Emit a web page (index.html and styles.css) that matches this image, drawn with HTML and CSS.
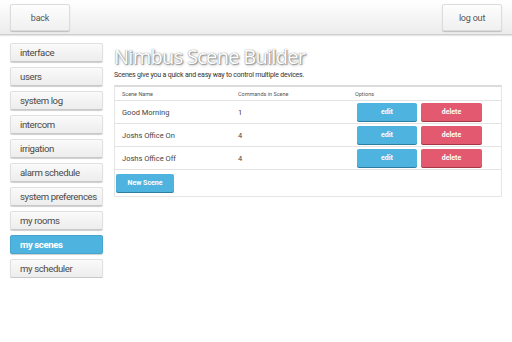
FILE: index.html
```html
<!DOCTYPE html>
<html lang="en">
<head>
    <meta charset="UTF-8">
    <meta name="viewport" content="width=device-width, initial-scale=1.0">
    <title>Nimbus Scene Builder</title>
    <link rel="stylesheet" href="styles.css">
</head>
<body>
    <div class="topbar">
        <button class="topbtn">back</button>
        <button class="topbtn">log out</button>
    </div>

    <div class="main">
        <ul class="menu">
            <li>interface</li>
            <li>users</li>
            <li>system log</li>
            <li>intercom</li>
            <li>irrigation</li>
            <li>alarm schedule</li>
            <li>system preferences</li>
            <li>my rooms</li>
            <li class="active">my scenes</li>
            <li>my scheduler</li>
        </ul>

        <div class="content">
            <h1>Nimbus Scene Builder</h1>
            <p class="lead">Scenes give you a quick and easy way to control multiple devices.</p>

            <div class="panel">
                <table class="scenes">
                    <tr>
                        <th class="c-name">Scene Name</th>
                        <th class="c-cmd">Commands in Scene</th>
                        <th>Options</th>
                    </tr>
                    <tr>
                        <td>Good Morning</td>
                        <td>1</td>
                        <td class="opts"><button class="btn edit">edit</button><button class="btn delete">delete</button></td>
                    </tr>
                    <tr>
                        <td>Joshs Office On</td>
                        <td>4</td>
                        <td class="opts"><button class="btn edit">edit</button><button class="btn delete">delete</button></td>
                    </tr>
                    <tr>
                        <td>Joshs Office Off</td>
                        <td>4</td>
                        <td class="opts"><button class="btn edit">edit</button><button class="btn delete">delete</button></td>
                    </tr>
                </table>
                <button class="btn newscene">New Scene</button>
            </div>
        </div>
    </div>
</body>
</html>
```

FILE: styles.css
```css
body {
    margin: 0;
    background: #fff;
    font-family: 'Roboto', 'Open Sans', sans-serif;
    color: #444;
}
button {
    font-family: inherit;
    cursor: pointer;
}
.topbar {
    height: 35px;
    display: flex;
    justify-content: space-between;
    align-items: flex-start;
    padding: 4px 10px 0;
    box-sizing: border-box;
    background: linear-gradient(#ffffff, #ececec);
    border-bottom: 1px solid #cfcfcf;
    box-shadow: 0 1px 1px #e6e6e6;
}
.topbtn {
    width: 60px;
    height: 27px;
    font-size: 9px;
    letter-spacing: -0.2px;
    color: #555;
    background: linear-gradient(#fdfdfd, #f0f0f0);
    border: 1px solid #dcdcdc;
    border-radius: 2px;
    box-shadow: 0 1px 1px #bdbdbd;
}
.main {
    display: flex;
    padding: 8px 10px 0 10px;
    gap: 11px;
}
.menu {
    list-style: none;
    margin: 0;
    padding: 0;
    width: 93px;
    display: flex;
    flex-direction: column;
    gap: 5px;
}
.menu li {
    height: 19px;
    line-height: 18px;
    padding-left: 9px;
    font-size: 9.6px;
    letter-spacing: -0.4px;
    color: #4a4a4a;
    background: linear-gradient(#fafafa, #ededed);
    border: 1px solid #e0e0e0;
    border-bottom-color: #c8c8c8;
    border-radius: 2px;
    box-shadow: 0 1px 1px #cfcfcf;
    box-sizing: border-box;
    white-space: nowrap;
}
.menu li.active {
    background: #4fb3df;
    border-color: #46a6d0;
    color: #fff;
    font-weight: bold;
}
.content {
    flex: 1;
}
h1 {
    margin: 1px 0 0 0;
    font-family: 'Open Sans', sans-serif;
    font-size: 20px;
    font-weight: normal;
    letter-spacing: -0.7px;
    line-height: 26px;
    color: #fff;
    text-shadow: 0 0 1px #777, 1px 1px 0 #aaa, 1px 1px 3px #999;
}
.lead {
    margin: 1px 0 6px 0;
    font-size: 7px;
    letter-spacing: -0.2px;
    color: #333;
}
.panel {
    border: 1px solid #e6e6e6;
    border-top: 2px solid #dcdcdc;
    padding-bottom: 4px;
}
.scenes {
    width: 100%;
    border-collapse: collapse;
}
.scenes th {
    text-align: left;
    font-size: 5.5px;
    font-weight: normal;
    color: #555;
    height: 13px;
    padding: 0 0 0 7px;
    border-bottom: 1px solid #e3e3e3;
}
.scenes td {
    font-size: 7.5px;
    color: #444;
    height: 22px;
    padding: 0 0 0 7px;
    border-bottom: 1px solid #e3e3e3;
}
.scenes .c-name { width: 109px; }
.scenes .c-cmd { width: 110px; }
.scenes td.opts {
    padding-left: 9px;
}
.btn {
    height: 18px;
    border: none;
    border-radius: 2px;
    font-size: 7px;
    font-weight: bold;
    color: #fff;
    box-shadow: 0 1px 0 #2f7d9f;
}
.edit {
    width: 60px;
    margin-right: 4px;
    background: #4fb3df;
}
.delete {
    width: 61px;
    background: #e35a70;
    box-shadow: 0 1px 0 #a33848;
}
.newscene {
    width: 58px;
    margin: 3px 0 0 1px;
    background: #4fb3df;
}
```
